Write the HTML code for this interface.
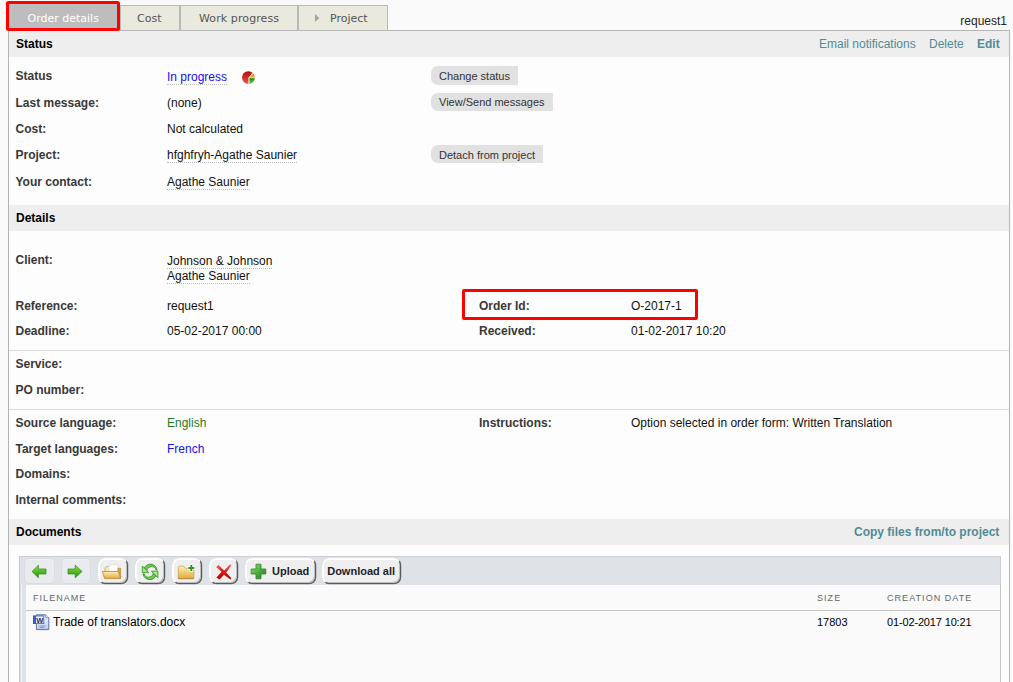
<!DOCTYPE html>
<html>
<head>
<meta charset="utf-8">
<title>Order details</title>
<style>
html,body{margin:0;padding:0;}
body{width:1013px;height:682px;overflow:hidden;background:#fafafa;position:relative;font-family:"Liberation Sans",Arial,sans-serif;font-size:12px;color:#000;}
.abs{position:absolute;white-space:nowrap;line-height:14px;}
#panel{position:absolute;left:8px;top:30px;width:1000px;height:700px;background:#fdfdfd;border:1px solid #b4b4b4;}
.hdr{position:absolute;left:9px;width:1000px;height:26px;background:#eeeeee;}
.hdr b{position:absolute;left:7px;top:6px;line-height:14px;color:#000;}
.tab{position:absolute;top:5px;height:24px;border:1px solid #b9b9b9;background:#e9e9dd;box-sizing:content-box;font-family:"DejaVu Sans",Verdana,sans-serif;font-size:11px;color:#555;line-height:24px;}
.tab span{position:absolute;top:1px;}
.lbl{font-weight:bold;color:#383838;left:15.5px;}
.lbl2{font-weight:bold;color:#383838;left:479px;}
.val{left:167px;color:#111;}
.val2{left:631px;color:#111;}
.dot{border-bottom:1px dotted #bbb;}
.link{color:#508c96;}
.btn{position:absolute;height:16px;line-height:16px;background:#e1e1e1;color:#333;font-size:11px;border-radius:7px 0 0 7px;padding:0 8px 0 8px;white-space:nowrap;}
.hr{position:absolute;left:9px;width:1000px;height:1px;background:#dcdcdc;}
.tb{position:absolute;top:558px;height:26px;border-style:solid;border-width:2px 1px 1px 2px;border-color:#fefefe #5a5a5a #5a5a5a #fefefe;border-radius:7px;background:#efefef;box-shadow:inset -1px -1px 0 #bcbcbc, 0.3px 0.3px 0.6px rgba(30,30,30,.5);box-sizing:border-box;}
.tb.dis{border:1px solid #d9dde1;background:#e9ebee;box-shadow:inset 0 1px 0 #eff1f3;height:26px;border-radius:5px;}
.tb svg{position:absolute;left:0;top:0;}
.tb b{position:absolute;top:4px;font-size:11px;line-height:14px;color:#1e1e2a;}
.colh{font-size:9px;letter-spacing:1.05px;color:#666;}
</style>
</head>
<body>
<div id="panel"></div>

<!-- tabs -->
<div class="tab" style="left:8px;width:170px;"></div>
<div class="tab" style="left:120px;width:58px;"><span style="left:16px;">Cost</span></div>
<div class="tab" style="left:180px;width:116px;"><span style="left:18px;letter-spacing:0.1px;">Work progress</span></div>
<div class="tab" style="left:298px;width:88px;"><span style="left:31px;">Project</span>
<svg style="position:absolute;left:16px;top:8px" width="5" height="9"><path d="M0 0 L4.3 4 L0 8 Z" fill="#aaa59c"/></svg></div>
<div style="position:absolute;left:6px;top:1px;width:108px;height:24px;border:3px solid #f00;border-radius:2.5px;background:#bdbdbd;font-family:'DejaVu Sans',Verdana,sans-serif;font-size:11px;color:#fff;line-height:24px;"><span style="position:absolute;left:18.5px;top:3px;">Order details</span></div>

<div class="abs" style="right:6px;top:14px;color:#222;">request1</div>

<!-- Status header -->
<div class="hdr" style="top:31px;"><b>Status</b></div>
<div class="abs link" style="left:819px;top:37px;">Email notifications</div>
<div class="abs link" style="left:929px;top:37px;">Delete</div>
<div class="abs link" style="left:977px;top:37px;font-weight:bold;">Edit</div>

<div class="abs lbl" style="top:69px;">Status</div>
<div class="abs lbl" style="top:96px;">Last message:</div>
<div class="abs lbl" style="top:122px;">Cost:</div>
<div class="abs lbl" style="top:148px;">Project:</div>
<div class="abs lbl" style="top:175px;">Your contact:</div>

<div class="abs val" style="top:70px;color:#1212ee;"><span class="dot">In progress</span></div>
<svg style="position:absolute;left:241px;top:70px;" width="15" height="15" viewBox="0 0 15 15">
<defs><linearGradient id="pr" x1="0" y1="0" x2="0" y2="1"><stop offset="0" stop-color="#b40a0a"/><stop offset="1" stop-color="#ee5050"/></linearGradient>
<linearGradient id="pg" x1="0" y1="0" x2="0" y2="1"><stop offset="0" stop-color="#0a8a0a"/><stop offset="1" stop-color="#66e03c"/></linearGradient></defs>
<circle cx="7.3" cy="7.5" r="6.3" fill="url(#pr)"/>
<path d="M8 8 L13.6 8 A6.3 6.3 0 0 1 8 13.8 Z" fill="url(#pg)"/>
<path d="M8.6 7.2 L11.6 3.2 A6.3 6.3 0 0 1 13.6 7.2 Z" fill="#e8a81c"/>
<path d="M7.9 14 L7.9 7.8 L11.8 2.8" stroke="#fff" stroke-width="0.9" fill="none"/>
<path d="M7.9 7.7 L13.8 7.7" stroke="#fff" stroke-width="0.8" fill="none"/>
</svg>
<div class="abs val" style="top:96px;">(none)</div>
<div class="abs val" style="top:122px;">Not calculated</div>
<div class="abs val" style="top:148px;"><span class="dot">hfghfryh-Agathe Saunier</span></div>
<div class="abs val" style="top:175px;"><span class="dot">Agathe Saunier</span></div>

<div class="btn" style="left:431px;top:66px;height:19px;line-height:20px;">Change status</div>
<div class="btn" style="left:431px;top:93px;height:18px;line-height:19px;">View/Send messages</div>
<div class="btn" style="left:431px;top:145px;height:18px;line-height:20px;">Detach from project</div>

<!-- Details header -->
<div class="hdr" style="top:205px;"><b>Details</b></div>

<div class="abs lbl" style="top:253px;">Client:</div>
<div class="abs val" style="top:254px;"><span class="dot">Johnson &amp; Johnson</span></div>
<div class="abs val" style="top:269px;"><span class="dot">Agathe Saunier</span></div>

<div class="abs lbl" style="top:299px;">Reference:</div>
<div class="abs val" style="top:299px;">request1</div>
<div class="abs lbl" style="top:324px;">Deadline:</div>
<div class="abs val" style="top:324px;">05-02-2017 00:00</div>

<div class="abs lbl2" style="top:299px;">Order Id:</div>
<div class="abs val2" style="top:299px;">O-2017-1</div>
<div class="abs lbl2" style="top:324px;">Received:</div>
<div class="abs val2" style="top:324px;">01-02-2017 10:20</div>
<div style="position:absolute;left:462px;top:289px;width:230px;height:25px;border:3px solid #f00;border-radius:2px;"></div>

<div class="hr" style="top:350px;"></div>
<div class="abs lbl" style="top:357px;">Service:</div>
<div class="abs lbl" style="top:383px;">PO number:</div>
<div class="hr" style="top:409px;"></div>

<div class="abs lbl" style="top:416px;">Source language:</div>
<div class="abs val" style="top:416px;color:#1f7a1f;">English</div>
<div class="abs lbl" style="top:442px;">Target languages:</div>
<div class="abs val" style="top:442px;color:#1212ee;">French</div>
<div class="abs lbl" style="top:467px;">Domains:</div>
<div class="abs lbl" style="top:493px;">Internal comments:</div>
<div class="abs lbl2" style="top:416px;">Instructions:</div>
<div class="abs val2" style="top:416px;">Option selected in order form: Written Translation</div>

<!-- Documents header -->
<div class="hdr" style="top:519px;"><b>Documents</b></div>
<div class="abs link" style="left:854px;top:525px;font-weight:bold;">Copy files from/to project</div>

<!-- file manager -->
<div style="position:absolute;left:19px;top:556px;width:982px;height:140px;background:#dfe3e8;border-left:1px solid #c6cacf;border-top:1px solid #c9cdd1;border-right:1px solid #c9cdd1;box-sizing:border-box;"></div>
<div style="position:absolute;left:20px;top:585px;width:1px;height:100px;background:#d6dadf;"></div><div style="position:absolute;left:21px;top:585px;width:1px;height:100px;background:#f6f7f8;"></div>
<div style="position:absolute;left:26px;top:585px;width:975px;height:100px;background:#fafafa;border-right:1px solid #c4c4c4;box-sizing:border-box;"></div>
<div style="position:absolute;left:26px;top:610px;width:974px;height:1px;background:#c6c6c6;"></div>

<div class="tb dis" style="left:24px;width:30.5px;"></div>
<div class="tb dis" style="left:61px;width:29.5px;"></div>
<div class="tb" style="left:98px;width:30px;"></div>
<div class="tb" style="left:135px;width:30px;"></div>
<div class="tb" style="left:172px;width:30px;"></div>
<div class="tb" style="left:209px;width:29px;"></div>
<div class="tb" style="left:245px;width:71px;"><b style="left:25px;">Upload</b></div>
<div class="tb" style="left:322px;width:79px;"><b style="left:3.2px;">Download all</b></div>

<svg style="position:absolute;left:0;top:550px;" width="420" height="90" viewBox="0 550 420 90">
<defs>
<linearGradient id="ga" x1="0" y1="0" x2="0" y2="1"><stop offset="0" stop-color="#86e048"/><stop offset="0.55" stop-color="#4cb822"/><stop offset="1" stop-color="#2f8f12"/></linearGradient>
<linearGradient id="gf" x1="0" y1="0" x2="0" y2="1"><stop offset="0" stop-color="#fdf0b6"/><stop offset="1" stop-color="#e4a838"/></linearGradient>
<linearGradient id="gp" x1="0" y1="0" x2="1" y2="1"><stop offset="0" stop-color="#a4e07c"/><stop offset="0.5" stop-color="#4fae3c"/><stop offset="1" stop-color="#1f7f1f"/></linearGradient>
<linearGradient id="gx" x1="0" y1="0" x2="0" y2="1"><stop offset="0" stop-color="#f06a6a"/><stop offset="0.5" stop-color="#dc1414"/><stop offset="1" stop-color="#c00000"/></linearGradient>
<linearGradient id="gd" x1="0" y1="0" x2="0" y2="1"><stop offset="0" stop-color="#f6f8ff"/><stop offset="1" stop-color="#bccaee"/></linearGradient>
<linearGradient id="gr" x1="0" y1="0" x2="1" y2="1"><stop offset="0" stop-color="#8fdc6a"/><stop offset="1" stop-color="#2f9a1f"/></linearGradient>
</defs>
<!-- back / forward arrows -->
<path d="M32 571.5 L38.4 565.2 L38.4 569 L46 569 L46 574 L38.4 574 L38.4 577.8 Z" fill="url(#ga)" stroke="#2f8a14" stroke-width="0.7" stroke-linejoin="round"/>
<path d="M82.1 571.5 L75.2 565.2 L75.2 569 L68 569 L68 574 L75.2 574 L75.2 577.8 Z" fill="url(#ga)" stroke="#2f8a14" stroke-width="0.7" stroke-linejoin="round"/>
<!-- open folder -->
<path d="M105 572 L105 567.8 L106.2 566.6 L110 566.6 L110 572 Z" fill="#f8eab4" stroke="#c99a48" stroke-width="0.7" stroke-linejoin="round"/>
<path d="M108.8 572 L108.8 566.2 L110.6 564.4 L118 564.4 L118 572 Z" fill="#fff" stroke="#cfcfcf" stroke-width="0.6"/>
<path d="M108.8 566.2 L110.6 566.2 L110.6 564.4 Z" fill="#d8d8d8"/>
<path d="M118 568.2 L120.6 568.2 L120.6 577.8 L118 572 Z" fill="#dca43c" stroke="#b5822f" stroke-width="0.6" stroke-linejoin="round"/>
<path d="M102.4 571.5 L118.4 571.5 L120.6 578.6 L104.6 578.6 Z" fill="url(#gf)" stroke="#b98634" stroke-width="0.8" stroke-linejoin="round"/>
<!-- refresh -->
<g id="rf">
<path d="M143.6 570.6 A6.8 6.8 0 0 1 157.1 569.8 L156 570 A4.7 4.7 0 0 0 146.8 570.8 Z" fill="#6ecb4a" stroke="#2f8f1f" stroke-width="0.8" stroke-linejoin="round"/>
<path d="M142.3 566 L142.3 572.6 L148.8 572.6 Z" fill="#a5e388" stroke="#2f8f1f" stroke-width="0.8" stroke-linejoin="round"/>
</g>
<g transform="rotate(180 150.1 571.9)">
<path d="M143.6 570.6 A6.8 6.8 0 0 1 157.1 569.8 L156 570 A4.7 4.7 0 0 0 146.8 570.8 Z" fill="#6ecb4a" stroke="#2f8f1f" stroke-width="0.8" stroke-linejoin="round"/>
<path d="M142.3 566 L142.3 572.6 L148.8 572.6 Z" fill="#a5e388" stroke="#2f8f1f" stroke-width="0.8" stroke-linejoin="round"/>
</g>
<!-- new folder -->
<path d="M178.3 578.6 L178.3 567 L179.2 566.1 L183.6 566.1 L186 568.6 L193.8 568.6 L193.8 578.6 Z" fill="url(#gf)" stroke="#c69744" stroke-width="0.7" stroke-linejoin="round"/>
<path d="M178.3 578.7 L193.8 578.7" stroke="#a87a30" stroke-width="0.8"/>
<path d="M190.3 565 L192.3 565 L192.3 567 L194.3 567 L194.3 569 L192.3 569 L192.3 571 L190.3 571 L190.3 569 L188.3 569 L188.3 567 L190.3 567 Z" fill="#2f9a1f" stroke="#fff" stroke-width="1.4" paint-order="stroke"/>
<!-- delete X -->
<path d="M216.2 567 L218.6 565 L224.2 570.6 L229.8 564.4 L231.6 565 L226.2 572.4 L231.4 578.2 L230.4 579.4 L224 574.8 L219.6 579.6 L216.4 577.4 L221.6 571.8 Z" fill="url(#gx)"/>
<!-- upload plus -->
<path d="M256 564.2 L261 564.2 L261 569 L265.8 569 L265.8 574 L261 574 L261 578.8 L256 578.8 L256 574 L251.2 574 L251.2 569 L256 569 Z" fill="url(#gp)" stroke="#2f7f2f" stroke-width="0.8" stroke-linejoin="round"/>
<!-- word doc icon -->
<path d="M36.4 614.8 L45.8 614.8 L48.8 617.8 L48.8 629.6 L36.4 629.6 Z" fill="url(#gd)" stroke="#51659f" stroke-width="0.9" stroke-linejoin="round"/>
<path d="M45.8 614.8 L45.8 617.8 L48.8 617.8" fill="#fff" stroke="#51659f" stroke-width="0.7"/>
<path d="M39.5 626 L45.5 626 M39.5 627.6 L44 627.6" stroke="#6d86c6" stroke-width="0.8"/>
<rect x="33" y="615.4" width="11.2" height="8.6" fill="#3163c5"/>
<rect x="36" y="616.4" width="7.4" height="6.8" fill="#eef2fb"/>
<text x="36.2" y="622.8" font-family="Liberation Sans, sans-serif" font-size="7.5" font-weight="bold" fill="#1c2f6a">W</text>
</svg>

<div class="abs colh" style="left:33px;top:591px;">FILENAME</div>
<div class="abs colh" style="left:817px;top:591px;">SIZE</div>
<div class="abs colh" style="left:887px;top:591px;">CREATION DATE</div>

<div class="abs" style="left:53px;top:615px;color:#000;">Trade of translators.docx</div>
<div class="abs" style="left:817px;top:615px;color:#000;font-size:11px;">17803</div>
<div class="abs" style="left:887px;top:615px;color:#000;font-size:11px;letter-spacing:-0.15px;">01-02-2017 10:21</div>
</body>
</html>
